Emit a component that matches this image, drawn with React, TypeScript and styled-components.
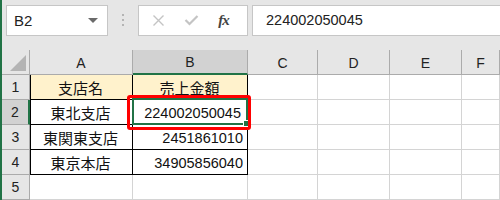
import styled, { createGlobalStyle } from 'styled-components';

const GlobalStyle = createGlobalStyle`
  html, body {
    margin: 0;
    padding: 0;
    background: #ffffff;
  }
  body {
    font-family: "Liberation Sans", Arial, "Noto Sans CJK JP", sans-serif;
    overflow: hidden;
  }
`;

const Window = styled.div`
  width: 500px;
  height: 200px;
  border-left: 2px solid #217346;
  box-sizing: border-box;
  background: #ffffff;
  overflow: hidden;
`;

const FormulaBar = styled.div`
  display: flex;
  align-items: center;
  height: 50px;
  padding: 0 0 10px 4px;
  box-sizing: border-box;
  background: #e6e6e6;
`;

const NameBox = styled.div`
  display: flex;
  align-items: center;
  justify-content: space-between;
  width: 102px;
  height: 31px;
  box-sizing: border-box;
  border: 1px solid #c6c6c6;
  background: #ffffff;
  padding: 0 9px 0 7px;
  font-size: 15px;
  color: #222;
`;

const Caret = styled.span`
  width: 0;
  height: 0;
  border-left: 5px solid transparent;
  border-right: 5px solid transparent;
  border-top: 5px solid #6a6a6a;
`;

const Grip = styled.div`
  display: flex;
  flex-direction: column;
  gap: 3px;
  width: 30px;
  align-items: center;
  span {
    width: 2px;
    height: 2px;
    background: #b4b4b4;
  }
`;

const ButtonBox = styled.div`
  display: flex;
  align-items: center;
  width: 110px;
  height: 31px;
  box-sizing: border-box;
  border: 1px solid #c6c6c6;
  background: #ffffff;
  padding: 0 0 0 13px;
`;

const IconSlot = styled.div<{ $shift?: number }>`
  width: 36px;
  display: flex;
  align-items: center;
  justify-content: flex-start;
  padding-left: ${(p) => p.$shift || 0}px;
`;

const Fx = styled.span`
  font-family: "Liberation Serif", "Times New Roman", serif;
  font-style: italic;
  font-weight: bold;
  font-size: 15px;
  color: #444;
  letter-spacing: -1px;
`;

const FormulaInput = styled.div`
  flex: 1;
  height: 31px;
  margin-left: 4px;
  box-sizing: border-box;
  border: 1px solid #c6c6c6;
  border-right: none;
  background: #ffffff;
  display: flex;
  align-items: center;
  padding-left: 13px;
  font-size: 14.5px;
  color: #222;
`;

const Grid = styled.div`
  display: grid;
  grid-template-columns: 28px 103px 115px 70px 72px 72px 1fr;
  grid-template-rows: repeat(6, 25px);
`;

const ColHeader = styled.div<{ $active?: boolean }>`
  position: relative;
  background: ${(p) => (p.$active ? '#d2d2d2' : '#e6e6e6')};
  border-right: 1px solid #ababab;
  border-bottom: ${(p) => (p.$active ? '2px solid #217346' : '1px solid #ababab')};
  box-sizing: border-box;
  display: flex;
  align-items: center;
  justify-content: center;
  font-size: 14px;
  color: #222;
  padding-top: 1px;
`;

const CornerMark = styled.div`
  position: absolute;
  right: 3px;
  bottom: 3px;
  width: 0;
  height: 0;
  border-left: 16px solid transparent;
  border-bottom: 16px solid #b4b4b4;
`;

const RowHeader = styled.div<{ $active?: boolean }>`
  background: ${(p) => (p.$active ? '#d2d2d2' : '#e6e6e6')};
  border-right: ${(p) => (p.$active ? '2px solid #217346' : '1px solid #ababab')};
  border-bottom: 1px solid #ababab;
  box-sizing: border-box;
  display: flex;
  align-items: center;
  justify-content: center;
  font-size: 14px;
  color: #222;
`;

const Cell = styled.div<{
  $align?: 'left' | 'center' | 'right';
  $fill?: string;
  $boxed?: boolean;
  $leftEdge?: boolean;
  $selected?: boolean;
}>`
  position: relative;
  background: ${(p) => p.$fill || '#ffffff'};
  border-right: 1px solid ${(p) => (p.$boxed ? '#000' : '#d4d4d4')};
  border-bottom: 1px solid ${(p) => (p.$boxed ? '#000' : '#d4d4d4')};
  box-shadow: ${(p) => (p.$leftEdge ? 'inset 1px 0 0 #000' : 'none')};
  box-sizing: border-box;
  display: flex;
  align-items: center;
  justify-content: ${(p) =>
    p.$align === 'right' ? 'flex-end' : p.$align === 'center' ? 'center' : 'flex-start'};
  padding: 1px ${(p) => (p.$selected ? 6 : 4)}px 0 3px;
  font-size: 14.5px;
  color: #111;
  white-space: nowrap;
`;

const JpText = styled.span`
  font-family: "Noto Sans CJK JP", sans-serif;
  font-size: 15px;
`;

const Selection = styled.div`
  position: absolute;
  z-index: 3;
  left: -1px;
  top: -2px;
  right: -1px;
  bottom: -1px;
  border: 2px solid #217346;
  pointer-events: none;
`;

const FillHandle = styled.div`
  position: absolute;
  right: -4px;
  bottom: -4px;
  width: 5px;
  height: 5px;
  background: #217346;
  border: 1px solid #fff;
`;

const Callout = styled.div`
  position: absolute;
  z-index: 4;
  left: -6px;
  top: -5px;
  right: -4px;
  bottom: -6px;
  border: 3px solid #ff0000;
  border-radius: 3px;
  pointer-events: none;
`;

const columns = ['A', 'B', 'C', 'D', 'E', 'F'];

const rows: { a: string; b: string }[] = [
  { a: '支店名', b: '売上金額' },
  { a: '東北支店', b: '224002050045' },
  { a: '東関東支店', b: '2451861010' },
  { a: '東京本店', b: '34905856040' },
];

const XIcon = () => (
  <svg width="13" height="13" viewBox="0 0 13 13">
    <path d="M1.5 1.5 L11.5 11.5 M11.5 1.5 L1.5 11.5" stroke="#c4c4c4" strokeWidth="1.4" fill="none" />
  </svg>
);

const CheckIcon = () => (
  <svg width="15" height="12" viewBox="0 0 15 12">
    <path d="M1.5 6 L5.5 10 L13.5 2" stroke="#c4c4c4" strokeWidth="2.2" fill="none" />
  </svg>
);

export default function App() {
  return (
    <Window>
      <GlobalStyle />
      <FormulaBar>
        <NameBox>
          <span>B2</span>
          <Caret />
        </NameBox>
        <Grip>
          <span />
          <span />
          <span />
        </Grip>
        <ButtonBox>
          <IconSlot>
            <XIcon />
          </IconSlot>
          <IconSlot $shift={3}>
            <CheckIcon />
          </IconSlot>
          <IconSlot $shift={6}>
            <Fx>fx</Fx>
          </IconSlot>
        </ButtonBox>
        <FormulaInput>224002050045</FormulaInput>
      </FormulaBar>
      <Grid>
        <ColHeader>
          <CornerMark />
        </ColHeader>
        {columns.map((c) => (
          <ColHeader key={c} $active={c === 'B'}>
            {c}
          </ColHeader>
        ))}
        {[1, 2, 3, 4, 5].map((r) => {
          const data = rows[r - 1];
          return [
            <RowHeader key={`h${r}`} $active={r === 2}>
              {r}
            </RowHeader>,
            <Cell
              key={`a${r}`}
              $align="center"
              $boxed={!!data}
              $leftEdge={!!data}
              $fill={r === 1 ? '#fff2cc' : undefined}
            >
              {data && <JpText>{data.a}</JpText>}
            </Cell>,
            <Cell
              key={`b${r}`}
              $align={r === 1 ? 'center' : 'right'}
              $boxed={!!data}
              $selected={r === 2}
              $fill={r === 1 ? '#fff2cc' : undefined}
            >
              {data && (r === 1 ? <JpText>{data.b}</JpText> : data.b)}
              {r === 2 && (
                <>
                  <Selection>
                    <FillHandle />
                  </Selection>
                  <Callout />
                </>
              )}
            </Cell>,
            ...['c', 'd', 'e', 'f'].map((k) => <Cell key={`${k}${r}`} />),
          ];
        })}
      </Grid>
    </Window>
  );
}
